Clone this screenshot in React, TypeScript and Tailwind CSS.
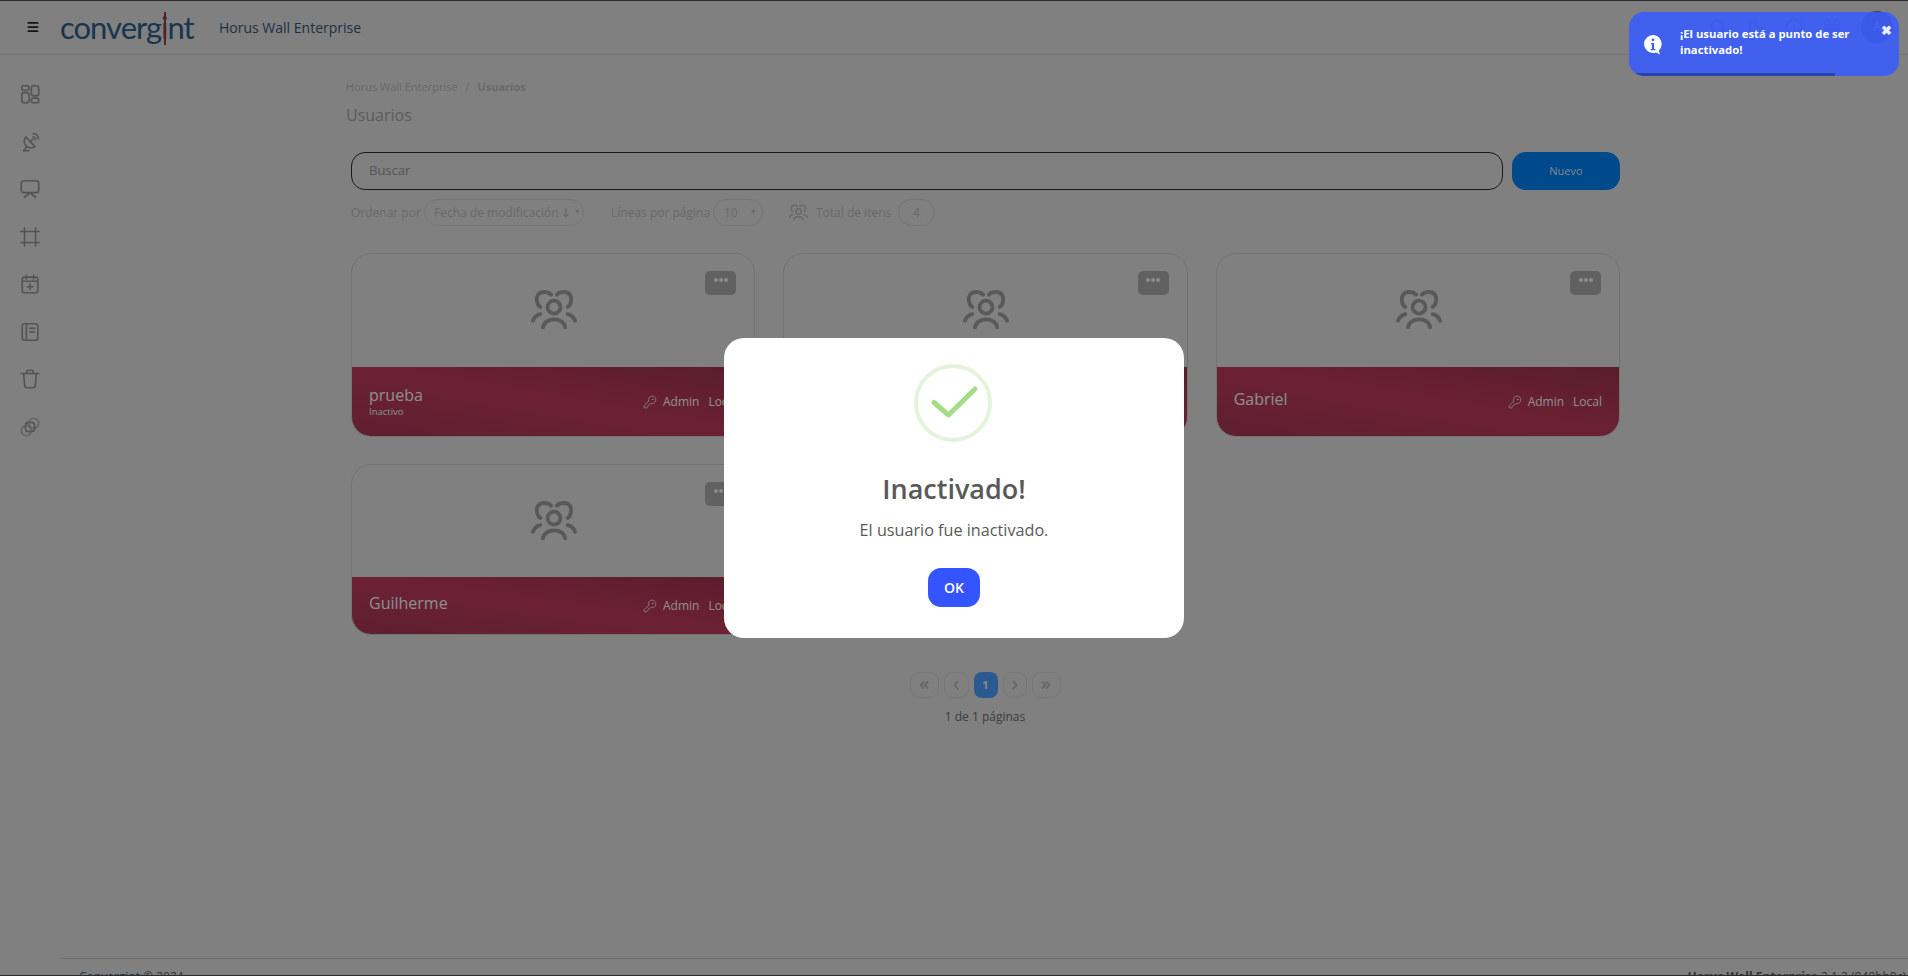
import { ChevronLeft, ChevronRight, ChevronsLeft, ChevronsRight, Frame, Grid3x3, Info, KeyRound, Menu, Moon, Search } from "lucide-react";

const font = { fontFamily: '"Open Sans", "Noto Sans", sans-serif' };

const UsersIcon = ({ className }: { className?: string }) => (
  <svg viewBox="0 0 44.600 38" fill="none" stroke="currentColor" strokeWidth="3.700" strokeLinecap="round" strokeLinejoin="round" className={className}>
    <circle cx="22.300" cy="16.700" r="6.300" />
    <path d="M11.500 36.500C13 26 32 26 33.100 36.500" />
    <path d="M19.500 4.500C16 1 9 1 6.500 5 4.500 9 6 15 9 16.500" />
    <path d="M25.100 4.500C28.600 1 35.600 1 38.100 5c2 4 .5 10-2.500 11.500" />
    <path d="M1.700 30C3 26.500 6 24.200 9 23.500" />
    <path d="M42.900 30c-1.300-3.500-4.300-5.800-7.300-6.500" />
  </svg>
);

const SideIcon = ({ children }: { children: React.ReactNode }) => (
  <svg viewBox="0 0 24 24" fill="none" stroke="currentColor" strokeWidth="1.8" strokeLinecap="round" strokeLinejoin="round" className="w-[22px] h-[22px]">
    {children}
  </svg>
);

const sideIcons = [
  <SideIcon key="a"><rect x="3" y="3" width="8" height="5" rx="2.200" /><rect x="13.500" y="3" width="8" height="11" rx="2.500" /><rect x="3" y="10.500" width="8" height="11" rx="2.500" /><rect x="13.500" y="16.500" width="8" height="5" rx="2.200" /></SideIcon>,
  <SideIcon key="b"><path d="M7.500 6.500c-2.500 3.500-2 7.500.5 10s6.500 2.500 9.500.5z" /><path d="M8.500 16.500L5 21.500h6" /><path d="M12 12l3-3" /><path d="M15 6.500a3 3 0 0 1 3 3" /><path d="M15.500 2.800a6 6 0 0 1 5.700 5.700" /></SideIcon>,
  <SideIcon key="c"><rect x="2.500" y="3" width="19" height="13" rx="3" /><path d="M12 16l-6 5M12 16l6 5" /></SideIcon>,
  <Frame key="d" className="w-[22px] h-[22px]" strokeWidth={1.7} />,
  <SideIcon key="e"><rect x="3.500" y="4.500" width="17" height="17" rx="2.500" /><path d="M8 2.500v4M16 2.500v4M3.500 9h17M12 12v6M9 15h6" /></SideIcon>,
  <SideIcon key="f"><rect x="3.500" y="3" width="17" height="18" rx="2.500" /><path d="M8 3v18M12 8h5M12 12h5" /></SideIcon>,
  <SideIcon key="g"><path d="M2.500 6h19M5 6l1.200 13c.1 1.500 1 2.500 2.500 2.500h6.600c1.500 0 2.400-1 2.500-2.500L19 6M8.500 6V4.500c0-1.200 1-2 2-2h3c1 0 2 .8 2 2V6" /></SideIcon>,
  <SideIcon key="h"><circle cx="8" cy="16" r="5.500" strokeOpacity="0.6" /><circle cx="16" cy="8" r="5.500" strokeOpacity="0.6" /><rect x="7" y="7" width="10" height="10" rx="3.500" /></SideIcon>,
];

const UserCard = ({ name, status, tall }: { name: string; status?: string; tall?: boolean }) => (
  <div className="rounded-[20px] border border-[#c0c0c4] overflow-hidden bg-[#d5d5d7] flex flex-col">
    <div className={`${tall ? "h-[113px]" : "h-[112px]"} px-[18px] pt-[17px] flex justify-end relative`}>
      <button className="w-[31px] h-[24px] rounded-[5px] bg-[#a2a2a2] flex justify-center pt-[7px] gap-[1px]">
        <span className="w-[4px] h-[4px] rounded-full bg-[#e8e8e8]" />
        <span className="w-[4px] h-[4px] rounded-full bg-[#e8e8e8]" />
        <span className="w-[4px] h-[4px] rounded-full bg-[#e8e8e8]" />
      </button>
      <UsersIcon className="absolute left-[179px] top-[36px] w-[46px] h-[39px] text-[#949494]" />
    </div>
    <div className={`${tall ? "h-[69px]" : "h-[57px]"} bg-gradient-to-tr from-[#9c3550] via-[#b43856] to-[#963249] pl-[17px] pr-[17px] flex items-center justify-between text-[#ececec]`}>
      <div className={status ? "" : "pb-[5px]"}>
        <div className="text-[16px] leading-[20px]">{name}</div>
        {status && <div className="text-[9.500px] leading-[13px]">{status}</div>}
      </div>
      <div className="flex items-center text-[12px]">
        <KeyRound className="w-[14px] h-[14px] mr-[6px]" strokeWidth={1.3} />
        <span>Admin</span>
        <span className="ml-[9px]">Local</span>
      </div>
    </div>
  </div>
);

const PageBtn = ({ children, w }: { children: React.ReactNode; w: string }) => (
  <div className={`${w} h-[26px] rounded-[9px] border border-[#c6c6ca] flex items-center justify-center text-[#a8a8aa]`}>{children}</div>
);

export default function App() {
  return (
    <div style={font} className="relative h-[976px] w-[1908px] overflow-hidden bg-[#d5d5d8] flex flex-col">
      <header className="h-[55px] shrink-0 border-b border-[#c6c6c8] flex items-center">
        <Menu className="ml-[26px] w-[14px] h-[14px] text-[#222]" strokeWidth={3} />
        <div className="ml-[20px] w-[159px] text-[31px] leading-none tracking-[-1px] text-[#2b5a80] whitespace-nowrap" style={{ fontFamily: "Lato, sans-serif" }}>
          converg<span className="relative">i<span className="absolute left-[2.500px] top-[4px] h-[33px] w-[2px] bg-[#a33040]" /></span>nt
        </div>
        <div className="text-[14px] font-medium text-[#31536f]">Horus Wall Enterprise</div>
        <div className="ml-auto mr-[15px] flex items-center gap-[20px] text-[#8d8d90]">
          <Search className="w-[18px] h-[18px]" />
          <Moon className="w-[18px] h-[18px]" />
          <Info className="w-[18px] h-[18px]" />
          <Grid3x3 className="w-[18px] h-[18px]" />
          <div className="w-[32px] h-[32px] rounded-full bg-[#6a6a90] text-white text-[13px] font-semibold flex items-center justify-center">A</div>
        </div>
      </header>

      <div className="flex flex-1 min-h-0">
        <aside className="w-[61px] shrink-0 flex flex-col items-center pt-[28px] pr-[1px] gap-[25.500px] text-[#8c8c8e]">
          {sideIcons}
        </aside>

        <div className="flex-1 flex flex-col min-w-0">
          <main className="ml-[285px] w-[1274px] flex-1">
            <div className="pt-[24px] text-[11px] leading-[16px] text-[#b0b0b2]">
              Horus Wall Enterprise <span className="mx-[5px]">/</span> <span className="font-bold">Usuarios</span>
            </div>
            <h1 className="mt-[8px] text-[16px] leading-[24px] text-[#9a9a9c]">Usuarios</h1>

            <div className="mt-[25px] ml-[5px] flex gap-[9px]">
              <div className="flex-1 h-[38px] rounded-[14px] border border-[#2c2c2c] flex items-center pl-[17px] text-[13px] text-[#8e8e90]">Buscar</div>
              <button className="w-[108px] h-[38px] rounded-[14px] bg-[#007be6] text-[11px] text-[#cfe3f5]">Nuevo</button>
            </div>

            <div className="mt-[9px] ml-[5px] flex items-center h-[27px] text-[12px] text-[#b0b0b2]">
              <span className="w-[68px] whitespace-nowrap">Ordenar por</span>
              <div className="ml-[5px] w-[160px] h-[27px] rounded-[14px] border border-[#c4c4c8] flex items-center pl-[9px] whitespace-nowrap">
                Fecha de modificación<span className="ml-[2px] font-bold text-[12px]" style={{ fontFamily: '"DejaVu Sans", sans-serif' }}>↓</span><span className="ml-[3px] text-[7px]">▼</span>
              </div>
              <span className="ml-[27px] w-[97px] whitespace-nowrap">Líneas por página</span>
              <div className="ml-[5px] w-[50px] h-[27px] rounded-[14px] border border-[#c4c4c8] flex items-center pl-[10px]">
                10<span className="ml-[12px] text-[7px]">▼</span>
              </div>
              <UsersIcon className="ml-[26px] w-[19px] h-[17px]" />
              <span className="ml-[8px] w-[74px] whitespace-nowrap">Total de itens</span>
              <div className="ml-[8px] w-[37px] h-[27px] rounded-[14px] border border-[#c4c4c8] flex items-center justify-center">4</div>
            </div>

            <div className="mt-[27px] ml-[5px] grid grid-cols-3 gap-x-[28px] gap-y-[27px]">
              <UserCard name="prueba" status="Inactivo" tall />
              <UserCard name="Lorena" tall />
              <UserCard name="Gabriel" tall />
              <UserCard name="Guilherme" />
            </div>

            <div className="mt-[37px] flex justify-center gap-[5px] pl-[4px]">
              <PageBtn w="w-[29px]"><ChevronsLeft className="w-[14px] h-[14px]" strokeWidth={3} /></PageBtn>
              <PageBtn w="w-[25px]"><ChevronLeft className="w-[14px] h-[14px]" strokeWidth={3} /></PageBtn>
              <div className="w-[24px] h-[26px] rounded-[8px] bg-[#4696f0] text-[11px] font-bold text-[#e4e4e4] flex items-center justify-center">1</div>
              <PageBtn w="w-[24px]"><ChevronRight className="w-[14px] h-[14px]" strokeWidth={3} /></PageBtn>
              <PageBtn w="w-[29px]"><ChevronsRight className="w-[14px] h-[14px]" strokeWidth={3} /></PageBtn>
            </div>
            <div className="mt-[11px] text-center pl-[4px] text-[12px] leading-[16px] text-[#666]">1 de 1 páginas</div>
          </main>

          <footer className="h-[19px] shrink-0 -mb-[1px] border-t border-[#b8b8ba] flex justify-between pl-[18px] pr-[2px] pt-[10px] text-[12px] leading-[16px] text-[#555] whitespace-nowrap">
            <div><span className="text-[#2b5a80]">Convergint</span> © 2024</div>
            <div><span className="font-bold">Horus Wall Enterprise</span> 2.1.2 (848bb0c)</div>
          </footer>
        </div>
      </div>

      {/* dimmed backdrop + alert */}
      <div className="absolute inset-0 bg-black/40 border-t border-b border-[#2e2e2e] flex items-center justify-center">
        <div className="w-[460px] h-[300px] bg-white rounded-[20px] flex flex-col items-center pt-[26px]">
          <div className="w-[78px] h-[78px] mr-[2px] rounded-full border-[4px] border-[#e4f4da] flex items-center justify-center">
            <svg viewBox="0 0 78 78" className="w-[78px] h-[78px] shrink-0">
              <path d="M20 38.500L34.500 51 61 25" fill="none" stroke="#a5dc86" strokeWidth="5" strokeLinecap="round" strokeLinejoin="round" />
            </svg>
          </div>
          <h2 className="mt-[26px] text-[27px] leading-[42px] font-semibold text-[#595959]">Inactivado!</h2>
          <p className="mt-[8px] text-[16.200px] leading-[24px] text-[#595959]">El usuario fue inactivado.</p>
          <button className="mt-[26px] w-[52px] h-[39px] rounded-[13px] bg-[#3454ff] text-white text-[14px] font-semibold">OK</button>
        </div>
      </div>

      {/* toast */}
      <div className="absolute left-[1629px] top-[12px] w-[270px] h-[64px] rounded-[15px] overflow-hidden bg-[#3a5cfa]/90 text-white flex items-center">
        <svg viewBox="0 0 20 20" className="ml-[14px] mt-[1px] w-[20px] h-[20px] shrink-0">
          <path d="M10 0a9 9 0 0 0 0 18c1.300 0 2-.2 3-.6l4 2.100-1.200-4A9 9 0 0 0 10 0z" fill="#fff" />
          <circle cx="10" cy="4.800" r="1.400" fill="#3a5cfa" />
          <path d="M8 8h3v6h1.300v1.300H7.700V14H9V9.300H8z" fill="#3a5cfa" />
        </svg>
        <div className="ml-[17px] mb-[4px] w-[190px] text-[11.300px] leading-[16px] font-bold">¡El usuario está a punto de ser inactivado!</div>
        <span className="absolute left-[252px] top-[11px] text-[13px] leading-[14px] font-bold text-[#e8ecff]">✖</span>
        <div className="absolute left-0 bottom-0 w-[206px] h-[3px] bg-[#2c43ab]" />
      </div>
    </div>
  );
}
